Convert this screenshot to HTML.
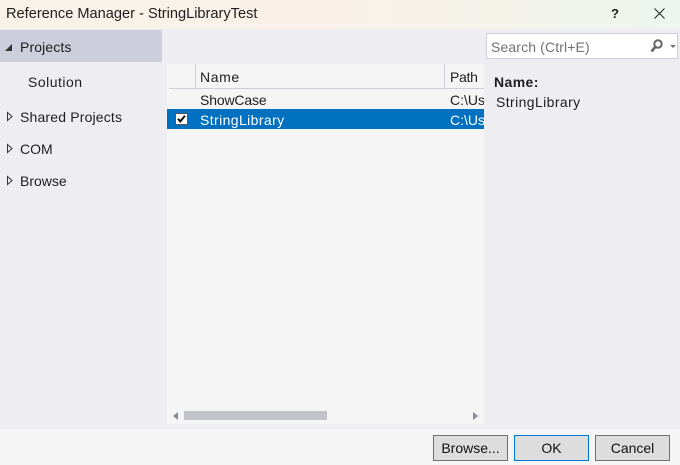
<!DOCTYPE html>
<html><head><meta charset="utf-8"><style>
html,body{margin:0;padding:0;width:680px;height:465px;overflow:hidden;background:#eeeef2}
body{position:relative;font-family:"Liberation Sans",sans-serif;font-size:14px;color:#1e1e1e}
div{position:absolute;box-sizing:border-box;white-space:nowrap}
.t{line-height:18px;height:18px}
.btn{top:435px;width:75px;height:26px;background:#ddd;border:1px solid #707070;text-align:center;line-height:24px;color:#111}
svg{position:absolute;overflow:visible}
</style></head><body>
<div style="left:0;top:0;width:680px;height:29px;background:linear-gradient(90deg,#f9f2e8 0%,#f9f1e7 50%,#edf5ee 100%)"></div>
<div class="t" style="left:6px;top:5px;font-size:14.6px">Reference Manager - StringLibraryTest</div>
<div class="t" style="left:611px;top:5px;font-size:13px;font-weight:bold">?</div>
<svg style="left:654px;top:8px" width="11" height="11"><path d="M.5.5 10.5 10.5M10.5.5.5 10.5" stroke="#222" fill="none"/></svg>

<div style="left:0;top:30px;width:162px;height:32px;background:#cccedb"></div>
<svg style="left:5px;top:43.5px" width="7" height="7"><path d="M7 0V7H0Z" fill="#333"/></svg>
<div class="t" style="left:20px;top:38px;letter-spacing:.12px">Projects</div>
<div class="t" style="left:28px;top:73px;letter-spacing:.5px">Solution</div>
<svg style="left:7px;top:112px" width="6" height="10"><path d="M.5.5 5 4.5 .5 8.5Z" fill="none" stroke="#333"/></svg>
<div class="t" style="left:20px;top:108px;letter-spacing:.17px">Shared Projects</div>
<svg style="left:7px;top:144px" width="6" height="10"><path d="M.5.5 5 4.5 .5 8.5Z" fill="none" stroke="#333"/></svg>
<div class="t" style="left:20px;top:140px">COM</div>
<svg style="left:7px;top:176px" width="6" height="10"><path d="M.5.5 5 4.5 .5 8.5Z" fill="none" stroke="#333"/></svg>
<div class="t" style="left:20px;top:172px">Browse</div>

<div style="left:167px;top:64px;width:317px;height:360px;background:#f5f5f5"></div>
<div style="left:169px;top:64px;width:315px;height:25px;border-bottom:1px solid #cccedb"></div>
<div style="left:195px;top:64px;width:1px;height:25px;background:#cccedb"></div>
<div style="left:444px;top:64px;width:1px;height:25px;background:#cccedb"></div>
<div class="t" style="left:200px;top:68px;letter-spacing:.6px">Name</div>
<div class="t" style="left:450px;top:68px;letter-spacing:-.3px">Path</div>
<div class="t" style="left:200px;top:91px;letter-spacing:-.15px">ShowCase</div>
<div class="t" style="left:450px;top:91px;width:34px;overflow:hidden">C:\Users</div>
<div style="left:167px;top:109px;width:317px;height:20px;background:#0070c0"></div>
<div style="left:175px;top:113px;width:13px;height:12px;background:#fff;border:1px solid #555"></div>
<svg style="left:175px;top:112px" width="13" height="13"><path d="M3 6.8 5.3 9.4 10 3.7" fill="none" stroke="#111" stroke-width="2"/></svg>
<div class="t" style="left:200px;top:111px;color:#fff;letter-spacing:.4px">StringLibrary</div>
<div class="t" style="left:450px;top:111px;width:34px;overflow:hidden;color:#fff">C:\Users</div>

<svg style="left:173px;top:412px" width="5" height="8"><path d="M5 0V8L0 4Z" fill="#868999"/></svg>
<div style="left:184px;top:411px;width:143px;height:9px;background:#c2c3c9"></div>
<svg style="left:473px;top:412px" width="5" height="8"><path d="M0 0V8L5 4Z" fill="#868999"/></svg>

<div style="left:486px;top:33px;width:192px;height:26px;background:#fff;border:1px solid #cccedb"></div>
<div class="t" style="left:491px;top:38px;color:#717171;letter-spacing:.13px">Search (Ctrl+E)</div>
<svg style="left:650px;top:39px" width="14" height="14"><circle cx="8" cy="5" r="3.7" fill="none" stroke="#666" stroke-width="2"/><path d="M5.2 8 1.5 12.5" stroke="#666" stroke-width="2.6"/></svg>
<svg style="left:670px;top:45px" width="6" height="3"><path d="M0 0H6L3 3Z" fill="#777"/></svg>
<div class="t" style="left:494px;top:73px;font-weight:bold;letter-spacing:.4px">Name:</div>
<div class="t" style="left:496px;top:93px;letter-spacing:.4px">StringLibrary</div>

<div style="left:0;top:429px;width:680px;height:36px;background:#f5f5f5"></div>
<div class="btn" style="left:433px">Browse...</div>
<div class="btn" style="left:514px;border-color:#0078d7">OK</div>
<div class="btn" style="left:595px">Cancel</div>
</body></html>
